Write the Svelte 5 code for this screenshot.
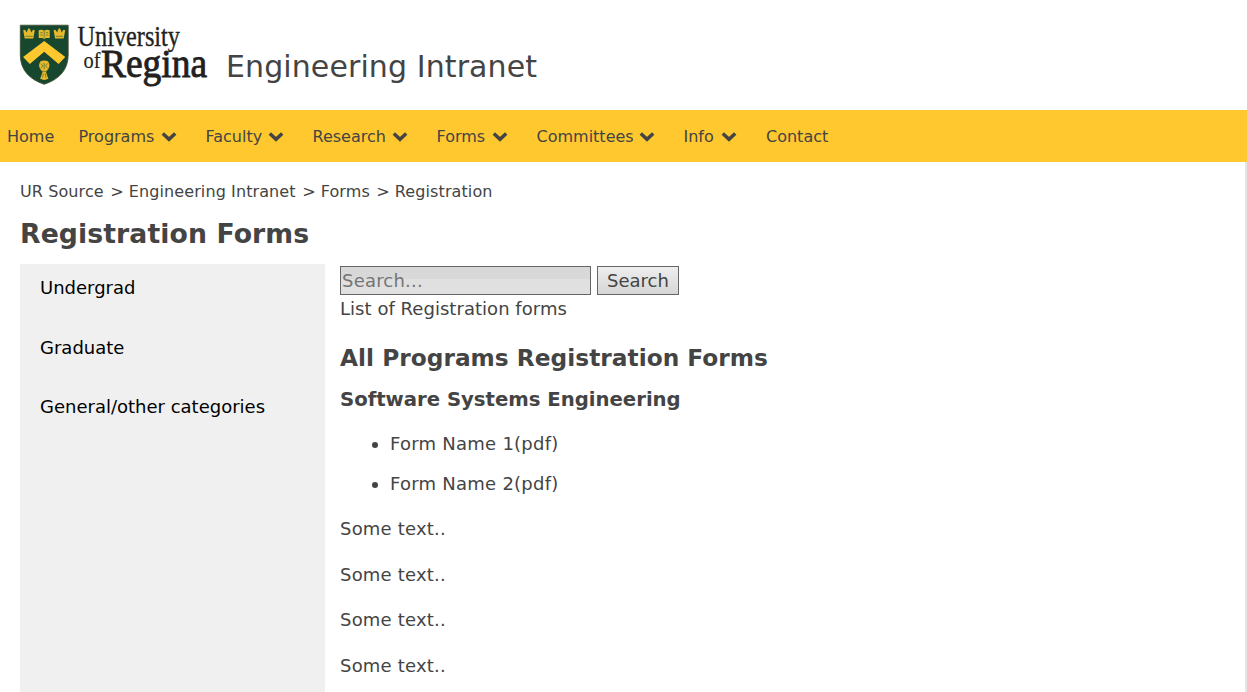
<script>
  const menu = [
    { label: 'Home', width: 46.5, sub: false },
    { label: 'Programs', width: 77, sub: true },
    { label: 'Faculty', width: 57, sub: true },
    { label: 'Research', width: 74, sub: true },
    { label: 'Forms', width: 50, sub: true },
    { label: 'Committees', width: 97, sub: true },
    { label: 'Info', width: 32.5, sub: true },
    { label: 'Contact', width: 62, sub: false }
  ];
  const crumbs = ['UR Source', 'Engineering Intranet', 'Forms', 'Registration'];
  const categories = ['Undergrad', 'Graduate', 'General/other categories'];
  const forms = ['Form Name 1(pdf)', 'Form Name 2(pdf)'];
  const paragraphs = ['Some text..', 'Some text..', 'Some text..', 'Some text..'];
</script>

<div class="page">
  <header>
    <svg class="logo" width="190" height="64" viewBox="0 0 190 64" role="img" aria-label="University of Regina">
      <path d="M.3 1.2H48.2V31C48.2 46 39 55.500 24.200 60.300C9.500 55.500 .3 46 .3 31Z" fill="#17472f" stroke="#3c4a2c" stroke-width=".8" />
      <path d="M24.200 17L45.300 33L38.600 40L24.200 27.700L9.800 40L3.100 33Z" fill="#ffc82e" />
      <g fill="#e6b92d">
        <path d="M3.200 6.300L5 5.800L6.800 8.500L7.600 5.800L9 4L10.400 5.800L11.200 8.500L13 5.800L14.800 6.300L13.300 14.500H4.700Z" />
        <path d="M33.600 6.300L35.400 5.800L37.200 8.500L38 5.800L39.400 4L40.800 5.800L41.600 8.500L43.400 5.800L45.200 6.300L43.700 14.500H35.100Z" />
        <path d="M18.700 6.200Q22 5.200 24.200 6.700Q26.500 5.200 29.700 6.200V14H26L24.200 15L22.500 14H18.700Z" />
        <path d="M20.500 37.300Q24.200 35.800 28 37.300Q31 42 27.500 46L26 48L28.300 54.800Q24.200 57 20.200 54.800L22.500 48L21 46Q17.500 42 20.500 37.300Z" />
      </g>
      <g fill="none" stroke="#17472f" stroke-width=".5">
        <path d="M5.500 12.300H12.800M35.900 12.300H43.200M24.200 7V14M20.300 8.700H22.700M20.300 11H22.700M25.800 8.700H28.200M25.800 11H28.200" />
        <path d="M24.200 39V45M21 39.500L23 42L20.800 44M27.500 39.500L25.500 42L27.700 44M21.500 47.300H27M23.300 49.500L22.500 53.500M25.200 49.500L26 53.500" />
      </g>
      <g fill="#231f20" font-family="'Liberation Serif', serif" stroke="#231f20">
        <text x="57.500" y="21.900" font-size="28.500" stroke-width=".35" textLength="102.500" lengthAdjust="spacingAndGlyphs">University</text>
        <text x="63.500" y="43.500" font-size="22.500" stroke-width=".15" textLength="17" lengthAdjust="spacingAndGlyphs">of</text>
        <text x="81" y="52.600" font-size="40" stroke-width=".9" textLength="106" lengthAdjust="spacingAndGlyphs">Regina</text>
      </g>
    </svg>
    <span class="site">Engineering Intranet</span>
  </header>

  <nav>
    {#each menu as item}
      <a class:sub={item.sub} href="#top">
        <span style:width="{item.width}px">{item.label}</span>
        {#if item.sub}
          <svg width="16" height="12" viewBox="0 0 16 12"><path d="M1.800 2.400L8 8.300L14.200 2.400" fill="none" stroke="#444" stroke-width="3.400" /></svg>
        {/if}
      </a>
    {/each}
  </nav>

  <div class="body">
    <div class="crumbs">
      {#each crumbs as crumb, i}{#if i > 0}<span class="sep">&gt;</span>{/if}<span>{crumb}</span>{/each}
    </div>
    <h1>Registration Forms</h1>
    <div class="columns">
      <aside>
        {#each categories as category}<a href="#top">{category}</a>{/each}
      </aside>
      <main>
        <form>
          <input placeholder="Search..." aria-label="Search" />
          <button type="button">Search</button>
        </form>
        <div class="lead">List of Registration forms</div>
        <h2>All Programs Registration Forms</h2>
        <h3>Software Systems Engineering</h3>
        <ul>
          {#each forms as form}<li>{form}</li>{/each}
        </ul>
        {#each paragraphs as text}<p>{text}</p>{/each}
      </main>
    </div>
  </div>
</div>

<style>
  :global(body) { margin: 0; overflow: hidden; background: #fff; }
  .page {
    height: 692px;
    overflow: hidden;
    display: flex;
    flex-direction: column;
    font: 18px/24px Verdana, 'DejaVu Sans', sans-serif;
    color: #444;
  }
  a { color: inherit; text-decoration: none; }
  header { height: 110px; flex: none; display: flex; align-items: flex-start; box-sizing: border-box; padding: 24px 0 0 20px; }
  .logo { flex: none; overflow: visible; }
  .site { margin: 23px 0 0 16px; font-size: 30px; line-height: 40px; letter-spacing: .1px; white-space: nowrap; }
  nav { height: 52px; flex: none; display: flex; align-items: center; box-sizing: border-box; padding: 2px 0 0 7px; background: #ffc82e; font-size: 16px; }
  nav a { display: flex; align-items: center; margin-right: 25px; }
  nav a.sub { margin-right: 29px; }
  nav span { white-space: nowrap; }
  nav a svg { margin: 0 0 0 5px; }
  .body { flex: 1; min-height: 0; display: flex; flex-direction: column; box-sizing: border-box; padding: 18px 0 0 20px; border-right: 2px solid #e6e6e6; }
  .crumbs { flex: none; display: flex; font-size: 16px; letter-spacing: .1px; }
  .sep { margin: 0 5px 0 6.500px; }
  h1 { flex: none; margin: 12px 0; font-size: 26.700px; line-height: 36px; letter-spacing: .09px; }
  .columns { flex: 1; min-height: 0; display: flex; }
  aside { width: 305px; box-sizing: border-box; padding: 12px 20px; background: #f0f0f0; color: #000; }
  aside a { display: block; margin-bottom: 35.600px; }
  main { padding: 2px 0 0 15px; }
  form { display: flex; gap: 6px; height: 29px; }
  input, button { box-sizing: border-box; height: 29px; font: inherit; color: #444; border: 1px solid #666; border-radius: 0; margin: 0; }
  input { width: 251px; padding: 0 1px 1px; letter-spacing: .2px; background: linear-gradient(#d8d8d8 0 45%, #e0e0e0 45%); }
  input::placeholder { color: #757575; opacity: 1; }
  button { width: 82px; padding: 0; background: linear-gradient(#eee, #d6d6d6); }
  .lead { margin-top: 2px; letter-spacing: .04px; }
  h2 { margin: 23px 0 16px; font-size: 23.250px; line-height: 28px; letter-spacing: .03px; }
  h3 { margin: 0 0 20px; font-size: 19.700px; line-height: 24px; letter-spacing: -.02px; }
  ul { margin: 0 0 21px; padding-left: 50px; letter-spacing: .25px; }
  li { margin-bottom: 16px; }
  li:last-child { margin-bottom: 0; }
  p { margin: 0 0 21.600px; letter-spacing: .2px; }
</style>
